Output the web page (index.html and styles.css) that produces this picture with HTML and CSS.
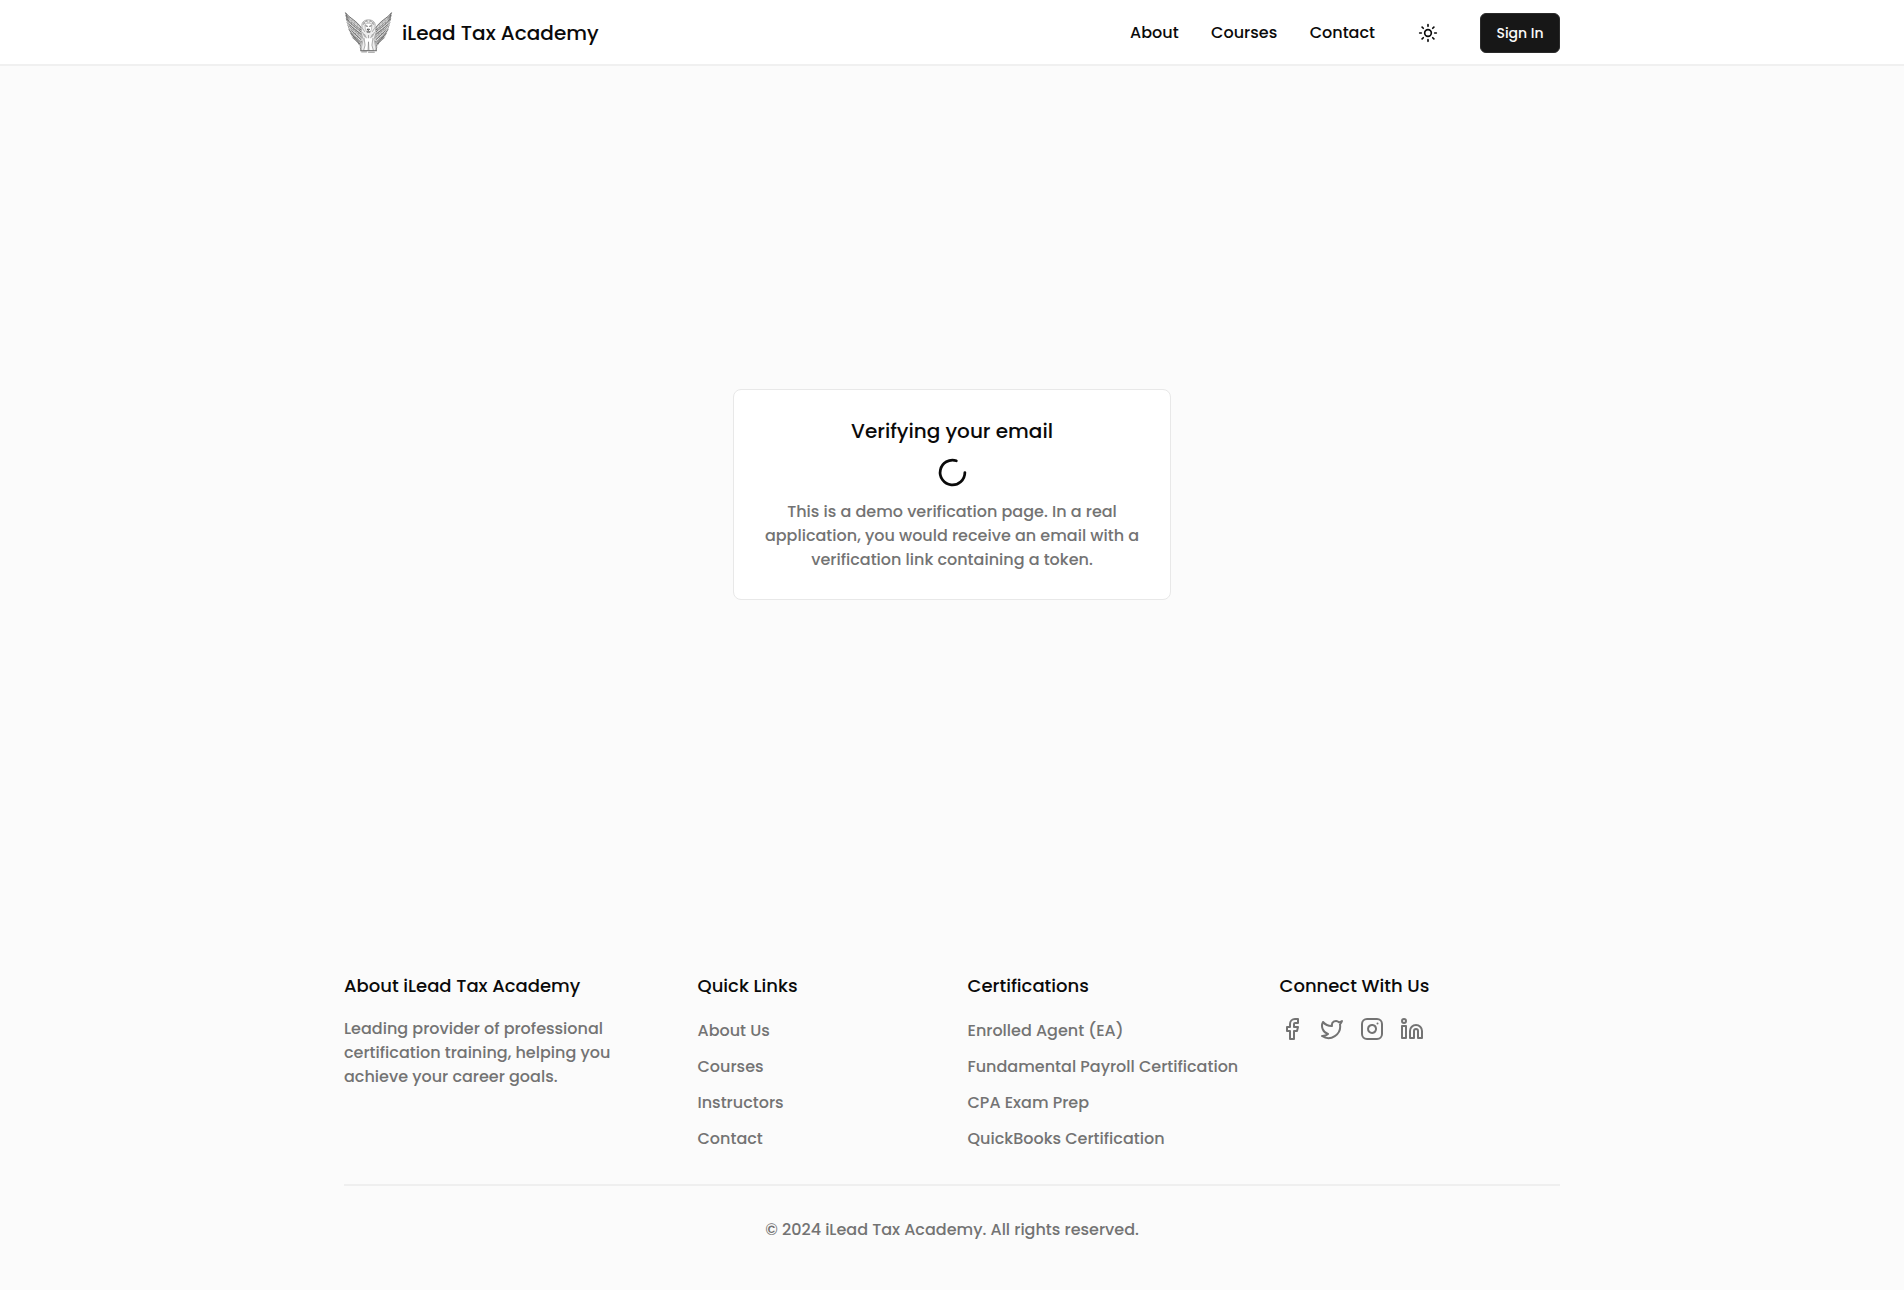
FILE: index.html
```html
<!DOCTYPE html>
<html lang="en">
<head>
<meta charset="utf-8">
<title>iLead Tax Academy</title>
<link rel="stylesheet" href="styles.css">
</head>
<body>
<header class="header">
  <div class="container header-row">
    <a class="brand" href="#">
      <svg class="logo" viewBox="0 0 48 42" fill="none" stroke="#3a3a3a" stroke-width=".65" stroke-linecap="round" stroke-linejoin="round" aria-hidden="true">
        <defs>
          <g id="wing">
            <path fill="#c8c8c8" stroke="none" d="M.5 1C5 6 12 9 16.500 16l1.500 11-2.500 6-4-3-4-3-4-9-1.500-8Z"/>
            <path d="M.6 1C5 6.500 12 9 16.500 16M.6 1C2 7 8 11 16 18M.8 3.500C2 9.500 8 14 16.500 20.500M1.300 7C3 13 9 17 16.500 23M2 10.500C4 16 10 20 16.500 25.500M3 14C5 18.500 10.500 23 16 28M4.200 18C6.500 22 11 26 15.600 30.500M6 22C8 25 12 28 15 32.500M8.500 26.500C10 28.500 12.500 30 15 34"/>
            <path stroke="#777" stroke-width=".5" d="M4 5.500 3.500 9M7 8.500 6 14M10 10.500 8.500 18M13 13 10.500 22M15.500 16 13 25M5 17.500l3 1M7 22l4 .5M9 26l4 .5"/>
            <path stroke="#fff" stroke-width=".6" d="M3.500 7c4 4 8 6 11.500 9.500M3.500 11c4 4 8 6 12 9.500M4.500 15.500c4 4 7 6 11 9.500M7 21c3 3 5 4.500 8 7.500M2.200 9.500l1.500 5 2.500 5"/>
          </g>
        </defs>
        <use href="#wing"/>
        <use href="#wing" transform="matrix(-1 0 0 1 48 0)"/>
        <path fill="#ededed" stroke="#888" d="M17.300 15c-1-4 2-7 6.700-7s7.700 3 6.700 7l1 6-2 7 1.500 7 1 4.500H16l1-4.500 1.500-7-2-7Z"/>
        <path stroke="#777" stroke-width=".6" d="M18.500 13c.5-2 2-3.500 4-4M29.500 13c-.5-2-2-3.500-4-4M19 11l2 1.500M29 11l-2 1.500M22 9l1 1.500M26 9 25 10.500M18 17l2 3M30 17l-2 3M18 21l2 4M30 21l-2 4M20 23l2 4M28 23l-2 4M24 24v5"/>
        <path fill="#fff" stroke="#888" stroke-width=".5" d="M20.500 13c1-2 6-2 7 0l-.5 5-1.500 3h-3L21 18Z"/>
        <path stroke="#222" stroke-width=".8" d="m21.300 14.200 1.500.4M26.700 14.200l-1.500.4M23 17.600h2l-1 1.200ZM22.700 20.300h2.600"/>
        <path fill="#fff" stroke="#777" stroke-width=".6" d="m19.500 27 1 7-1.500 5.500h4.500l.5-9 .5 9H29L27.500 34l1-7"/>
        <path stroke="#555" d="M15.800 39.700h16.500M17 40.900h5M24 41.200h6M16.800 30l-1.300 6 .8 3M31.200 30l1.300 6-.8 3"/>
      </svg>
      <span>iLead Tax Academy</span>
    </a>
    <nav class="nav">
      <a href="#">About</a>
      <a href="#">Courses</a>
      <a href="#">Contact</a>
      <button class="theme" aria-label="Toggle theme">
        <svg width="20" height="20" viewBox="0 0 24 24" class="icon"><circle cx="12" cy="12" r="4"/><path d="M12 2v2M12 20v2M4.930 4.930l1.410 1.410M17.660 17.660l1.410 1.410M2 12h2M20 12h2M6.340 17.660l-1.410 1.410M19.070 4.930l-1.410 1.410"/></svg>
      </button>
      <button class="signin">Sign In</button>
    </nav>
  </div>
</header>
<main class="main">
  <section class="card">
    <h1>Verifying your email</h1>
    <svg width="33" height="33" viewBox="0 0 24 24" class="icon"><path d="M21 12a9 9 0 1 1-6.219-8.560"/></svg>
    <p>This is a demo verification page. In a real application, you would receive an email with a verification link containing a token.</p>
  </section>
</main>
<footer class="footer container">
  <div class="columns">
    <section>
      <h2>About iLead Tax Academy</h2>
      <p class="about">Leading provider of professional certification training, helping you achieve your career goals.</p>
    </section>
    <section>
      <h2>Quick Links</h2>
      <ul class="links">
        <li><a href="#">About Us</a></li>
        <li><a href="#">Courses</a></li>
        <li><a href="#">Instructors</a></li>
        <li><a href="#">Contact</a></li>
      </ul>
    </section>
    <section>
      <h2>Certifications</h2>
      <ul class="links">
        <li><a href="#">Enrolled Agent (EA)</a></li>
        <li><a href="#">Fundamental Payroll Certification</a></li>
        <li><a href="#">CPA Exam Prep</a></li>
        <li><a href="#">QuickBooks Certification</a></li>
      </ul>
    </section>
    <section>
      <h2>Connect With Us</h2>
      <div class="social">
        <a href="#" aria-label="Facebook"><svg width="24" height="24" viewBox="0 0 24 24" class="icon"><path d="M18 2h-3a5 5 0 0 0-5 5v3H7v4h3v8h4v-8h3l1-4h-4V7a1 1 0 0 1 1-1h3z"/></svg></a>
        <a href="#" aria-label="Twitter"><svg width="24" height="24" viewBox="0 0 24 24" class="icon"><path d="M22 4s-.7 2.100-2 3.400c1.600 10-9.400 17.300-18 11.600 2.200.1 4.400-.6 6-2C3 15.500.5 9.600 3 5c2.200 2.600 5.600 4.100 9 4-.9-4.200 4-6.600 7-3.800 1.100 0 3-1.200 3-1.200z"/></svg></a>
        <a href="#" aria-label="Instagram"><svg width="24" height="24" viewBox="0 0 24 24" class="icon"><rect x="2" y="2" width="20" height="20" rx="5"/><path d="M16 11.370A4 4 0 1 1 12.630 8 4 4 0 0 1 16 11.370zM17.500 6.500h.01"/></svg></a>
        <a href="#" aria-label="LinkedIn"><svg width="24" height="24" viewBox="0 0 24 24" class="icon"><path d="M16 8a6 6 0 0 1 6 6v7h-4v-7a2 2 0 0 0-4 0v7h-4v-7a6 6 0 0 1 6-6z"/><rect x="2" y="9" width="4" height="12"/><circle cx="4" cy="4" r="2"/></svg></a>
      </div>
    </section>
  </div>
  <p class="copyright">© 2024 iLead Tax Academy. All rights reserved.</p>
</footer>
</body>
</html>
```
FILE: styles.css
```css
*, *::before, *::after { box-sizing: border-box; margin: 0; padding: 0; }
body {
  min-height: 100vh;
  display: flex;
  flex-direction: column;
  background: #fbfbfb;
  color: #0a0a0a;
  font: 500 16px/24px Poppins, Inter, sans-serif;
}
a { color: inherit; text-decoration: none; }
ul { list-style: none; }
button { font: inherit; }
.icon { display: block; fill: none; stroke: currentColor; stroke-width: 2; stroke-linecap: round; stroke-linejoin: round; }
.container { width: 1216px; margin: 0 auto; }

.header { background: #fff; border-bottom: 2px solid #f0f0f0; }
.header-row { height: 64px; padding-top: 1px; display: flex; align-items: center; justify-content: space-between; }
.brand { display: flex; align-items: center; gap: 9px; font-size: 20px; line-height: 28px; }
.brand span { padding-top: 1px; }
.logo { width: 49px; height: 41px; }
.nav { display: flex; align-items: center; gap: 32.500px; }
.nav a { padding-top: 1px; }
.theme { width: 40px; height: 40px; display: grid; place-items: center; border: 0; background: none; color: #0a0a0a; }
.signin {
  width: 80px;
  height: 40px;
  border: 1px solid #2b2b2b;
  border-radius: 6px;
  background: #171717;
  color: #fafafa;
  font-size: 14px;
  line-height: 20px;
}

.main { height: 860px; padding-bottom: 3px; display: grid; place-items: center; }
.card {
  width: 438px;
  height: 211px;
  padding: 27px 28px;
  display: flex;
  flex-direction: column;
  align-items: center;
  gap: 11px;
  background: #fff;
  border: 1px solid #e8e8e8;
  border-radius: 8px;
  text-align: center;
}
.card h1 { font-size: 20px; line-height: 28px; font-weight: 500; }
.card p, .footer { color: #737373; }

.footer { padding-top: 46px; }
.columns { display: grid; grid-template-columns: 353.500px 270px 312px 1fr; height: 214px; border-bottom: 2px solid #efefef; }
.columns h2 { font-size: 18px; line-height: 28px; font-weight: 500; color: #0a0a0a; }
.about { width: 280px; margin-top: 17px; }
.links { margin-top: 19px; display: grid; gap: 12px; }
.social { margin-top: 16.500px; display: flex; gap: 16px; }
.copyright { margin-top: 32px; text-align: center; }
```
